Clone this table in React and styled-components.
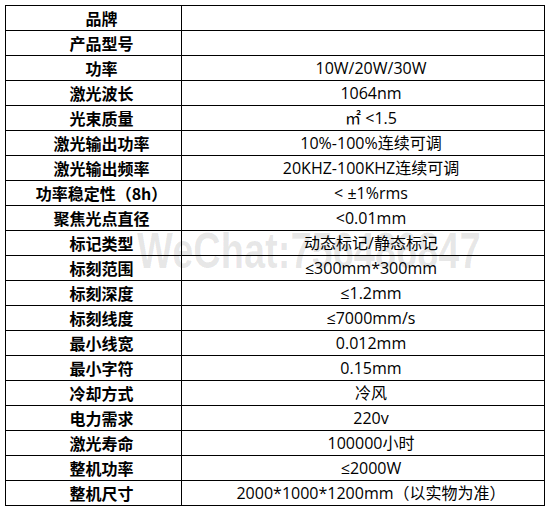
import styled, { createGlobalStyle } from "styled-components";

const GlobalStyle = createGlobalStyle`
  html, body {
    margin: 0;
    padding: 0;
    background: #fff;
  }
  body {
    font-family: "Noto Sans CJK SC", "Noto Sans", sans-serif;
    color: #000;
  }
`;

const Page = styled.div`
  position: relative;
  width: 559px;
  height: 510px;
  padding: 5px 0 0 5px;
  box-sizing: border-box;
  overflow: hidden;
`;

const SpecTable = styled.table`
  border-collapse: collapse;
  table-layout: fixed;
  width: 540px;
`;

const Row = styled.tr`
  height: 25px;
`;

const Cell = styled.td`
  border: 1px solid #000;
  padding: 0 0 0 16px;
  height: 24px;
  text-align: center;
  vertical-align: middle;
  white-space: nowrap;
  line-height: 24px;
  font-family: ${(p) =>
    p.$label
      ? `"Noto Sans CJK SC", sans-serif`
      : `"Open Sans", "Noto Sans CJK SC", sans-serif`};
  font-size: 16px;
  font-weight: ${(p) => (p.$label ? 700 : 400)};
  width: ${(p) => (p.$label ? "176px" : "auto")};
  box-sizing: border-box;
`;

const Watermark = styled.div`
  position: absolute;
  left: 137px;
  top: 226px;
  font-family: "Liberation Sans", Arial, sans-serif;
  font-weight: 700;
  font-size: 50px;
  line-height: 1;
  transform: scaleX(0.76);
  transform-origin: left top;
  color: rgba(0, 0, 0, 0.1);
  pointer-events: none;
  white-space: nowrap;
`;

const specs = [
  ["品牌", ""],
  ["产品型号", ""],
  ["功率", "10W/20W/30W"],
  ["激光波长", "1064nm"],
  ["光束质量", "㎡ <1.5"],
  ["激光输出功率", "10%-100%连续可调"],
  ["激光输出频率", "20KHZ-100KHZ连续可调"],
  ["功率稳定性（8h）", "< ±1%rms"],
  ["聚焦光点直径", "<0.01mm"],
  ["标记类型", "动态标记/静态标记"],
  ["标刻范围", "≤300mm*300mm"],
  ["标刻深度", "≤1.2mm"],
  ["标刻线度", "≤7000mm/s"],
  ["最小线宽", "0.012mm"],
  ["最小字符", "0.15mm"],
  ["冷却方式", "冷风"],
  ["电力需求", "220v"],
  ["激光寿命", "100000小时"],
  ["整机功率", "≤2000W"],
  ["整机尺寸", "2000*1000*1200mm（以实物为准）"],
];

export default function App() {
  return (
    <Page>
      <GlobalStyle />
      <SpecTable>
        <tbody>
          {specs.map(([label, value]) => (
            <Row key={label}>
              <Cell $label>{label}</Cell>
              <Cell>{value}</Cell>
            </Row>
          ))}
        </tbody>
      </SpecTable>
      <Watermark>WeChat:756486847</Watermark>
    </Page>
  );
}
